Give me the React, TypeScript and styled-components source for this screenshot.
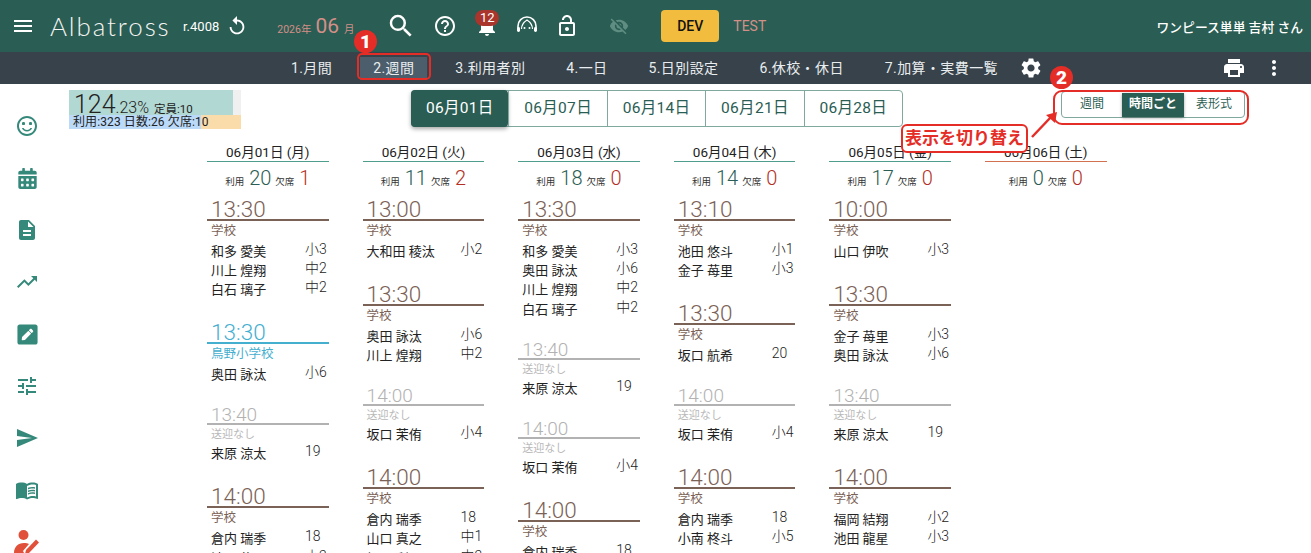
import { createGlobalStyle, styled } from 'styled-components';
import { FaCalendarAlt, FaPenSquare } from 'react-icons/fa';
import {
  MdDescription,
  MdHelpOutline,
  MdMenu,
  MdMenuBook,
  MdMoreVert,
  MdNotifications,
  MdOutlineLockOpen,
  MdPrint,
  MdReplay,
  MdSearch,
  MdSend,
  MdSentimentSatisfiedAlt,
  MdSettings,
  MdTrendingUp,
  MdTune,
  MdVisibilityOff,
} from 'react-icons/md';

type Kind = 'school' | 'pickup' | 'none';
type Group = { time: string; kind: Kind; label: string; kids: [string, string][] };
type Day = { date: string; used: number; absent: number; holiday?: boolean; groups: Group[] };

const school = (time: string, kids: [string, string][]): Group => ({ time, kind: 'school', label: '学校', kids });
const none = (time: string, kids: [string, string][]): Group => ({ time, kind: 'none', label: '送迎なし', kids });

const days: Day[] = [
  {
    date: '06月01日 (月)',
    used: 20,
    absent: 1,
    groups: [
      school('13:30', [['和多 愛美', '小3'], ['川上 煌翔', '中2'], ['白石 璃子', '中2']]),
      { time: '13:30', kind: 'pickup', label: '鳥野小学校', kids: [['奥田 詠汰', '小6']] },
      none('13:40', [['来原 涼太', '19']]),
      school('14:00', [['倉内 瑞季', '18'], ['池田 龍星', '小2']]),
    ],
  },
  {
    date: '06月02日 (火)',
    used: 11,
    absent: 2,
    groups: [
      school('13:00', [['大和田 稜汰', '小2']]),
      school('13:30', [['奥田 詠汰', '小6'], ['川上 煌翔', '中2']]),
      none('14:00', [['坂口 茉侑', '小4']]),
      school('14:00', [['倉内 瑞季', '18'], ['山口 真之', '中1'], ['桐野 利同', '中2']]),
    ],
  },
  {
    date: '06月03日 (水)',
    used: 18,
    absent: 0,
    groups: [
      school('13:30', [['和多 愛美', '小3'], ['奥田 詠汰', '小6'], ['川上 煌翔', '中2'], ['白石 璃子', '中2']]),
      none('13:40', [['来原 涼太', '19']]),
      none('14:00', [['坂口 茉侑', '小4']]),
      school('14:00', [['倉内 瑞季', '18']]),
    ],
  },
  {
    date: '06月04日 (木)',
    used: 14,
    absent: 0,
    groups: [
      school('13:10', [['池田 悠斗', '小1'], ['金子 苺里', '小3']]),
      school('13:30', [['坂口 航希', '20']]),
      none('14:00', [['坂口 茉侑', '小4']]),
      school('14:00', [['倉内 瑞季', '18'], ['小南 柊斗', '小5']]),
    ],
  },
  {
    date: '06月05日 (金)',
    used: 17,
    absent: 0,
    groups: [
      school('10:00', [['山口 伊吹', '小3']]),
      school('13:30', [['金子 苺里', '小3'], ['奥田 詠汰', '小6']]),
      none('13:40', [['来原 涼太', '19']]),
      school('14:00', [['福岡 結翔', '小2'], ['池田 龍星', '小3']]),
    ],
  },
  { date: '06月06日 (土)', used: 0, absent: 0, holiday: true, groups: [] },
];

const navItems = ['1.月間', '2.週間', '3.利用者別', '4.一日', '5.日別設定', '6.休校・休日', '7.加算・実費一覧'];
const weekTabs = ['06月01日', '06月07日', '06月14日', '06月21日', '06月28日'];

const kindColor: Record<Kind, string> = { school: '#7b6256', pickup: '#45afcf', none: '#b2b2b2' };

const GlobalStyle = createGlobalStyle`
  html, body {
    margin: 0;
    height: 100%;
    overflow: hidden;
    background: #fff;
    font-family: Roboto, 'Noto Sans CJK JP', sans-serif;
  }
`;

const Page = styled.div`
  position: relative;
  width: 1311px;
  height: 553px;
  overflow: hidden;
`;

const TopBar = styled.header`
  display: flex;
  align-items: center;
  height: 52px;
  background: #2a5d53;
  color: #fff;
`;

const MenuButton = styled.span`
  display: flex;
  margin: 0 15px 0 11px;
  font-size: 24px;
`;

const Logo = styled.span`
  width: 133px;
  font-family: Lato, sans-serif;
  font-size: 26px;
  font-weight: 300;
  letter-spacing: 1.9px;
  color: #f4f4f2;
`;

const Revision = styled.span`
  font-size: 13px;
`;

const ReloadIcon = styled.span`
  display: flex;
  margin: 0 29px 0 7px;
  font-size: 22px;
`;

const MonthLabel = styled.span`
  display: flex;
  align-items: baseline;
  width: 109px;
  font-size: 10.5px;
  color: #d48f88;
  strong {
    margin: 0 5px 0 4px;
    font-size: 21px;
    font-weight: 400;
  }
`;

const HeadIcon = styled.span<{ $left: number; $size: number; $dim?: boolean }>`
  position: relative;
  display: flex;
  justify-content: center;
  width: ${p => p.$size}px;
  margin-left: ${p => p.$left}px;
  font-size: ${p => p.$size}px;
  color: ${p => (p.$dim ? '#5f8d82' : '#fff')};
`;

const CountBadge = styled.span`
  position: absolute;
  top: -4px;
  left: 0;
  width: 24px;
  height: 16px;
  border-radius: 8px;
  background: #a9352d;
  font-size: 13px;
  line-height: 16px;
  text-align: center;
`;

const DevButton = styled.span`
  display: flex;
  align-items: center;
  justify-content: center;
  width: 58px;
  height: 32px;
  margin-left: 32px;
  border-radius: 4px;
  background: #f2bd3e;
  color: #111;
  font-size: 14px;
  font-weight: 500;
`;

const TestLabel = styled.span`
  margin-left: 14px;
  font-size: 14px;
  color: #d48f88;
`;

const UserName = styled.span`
  margin-left: auto;
  margin-right: 8px;
  font-size: 12.8px;
  font-weight: 500;
`;

const NavBar = styled.nav`
  display: flex;
  align-items: center;
  gap: 15px;
  height: 32px;
  padding-left: 278px;
  background: #37424a;
  color: #e9edef;
`;

const NavItem = styled.span<{ $active: boolean }>`
  height: 23px;
  padding: 0 13px;
  background: ${p => (p.$active ? '#4c5d6b' : 'transparent')};
  font-size: 14px;
  letter-spacing: 0.4px;
  line-height: 23px;
  white-space: nowrap;
`;

const NavIcon = styled.span<{ $left: number }>`
  display: flex;
  margin-left: ${p => p.$left}px;
  font-size: 24px;
  color: #fff;
`;

const Body = styled.div`
  display: flex;
`;

const SideBar = styled.aside`
  display: flex;
  flex-direction: column;
  flex: none;
  gap: 28px;
  width: 54px;
  padding-top: 30px;
  align-items: center;
  color: #35897a;
  font-size: 24px;
`;

const SideIcon = styled.span<{ $size?: number }>`
  display: flex;
  align-items: center;
  height: 24px;
  font-size: ${p => p.$size ?? 24}px;
`;

const Main = styled.main`
  flex: 1;
  min-width: 0;
`;

const Toolbar = styled.div`
  display: flex;
  align-items: flex-start;
  height: 53px;
  padding: 6px 0 0 15px;
`;

const Rate = styled.div`
  position: relative;
  flex: none;
  width: 172px;
  height: 39px;
  margin-right: 170px;
  color: #222;
  background: linear-gradient(#f0f0f0, #f0f0f0) top / 100% 25px no-repeat, #f9dcaa;
`;

const RateFill = styled.div<{ $top: number; $height: number; $color: string }>`
  position: absolute;
  top: ${p => p.$top}px;
  left: 0;
  height: ${p => p.$height}px;
  background: ${p => p.$color};
`;

const RateTop = styled.div`
  position: absolute;
  top: 2px;
  left: 5px;
  display: flex;
  align-items: baseline;
  height: 23px;
  font-size: 11.5px;
  line-height: 25px;
  white-space: nowrap;
  b {
    font-size: 25px;
    font-weight: 300;
  }
  i {
    margin-right: 5px;
    font-size: 16px;
    font-style: normal;
    font-weight: 300;
  }
`;

const RateBottom = styled.div`
  position: absolute;
  top: 25px;
  left: 4px;
  font-size: 12px;
  letter-spacing: 0.1px;
  line-height: 14px;
  white-space: nowrap;
`;

const WeekTabs = styled.div`
  display: flex;
  flex: none;
  height: 37px;
  border: 1px solid #7fa89f;
  border-radius: 4px;
  box-sizing: border-box;
  width: 492px;
  margin-right: 158px;
`;

const WeekTab = styled.span<{ $active: boolean }>`
  flex: 1;
  margin: ${p => (p.$active ? '-1px 0 -1px -1px' : '0')};
  border-left: ${p => (p.$active ? '0' : '1px solid #7fa89f')};
  border-radius: ${p => (p.$active ? '4px' : '0')};
  background: ${p => (p.$active ? '#2a5d53' : 'transparent')};
  box-shadow: ${p => (p.$active ? '0 2px 4px rgba(0,0,0,.35)' : 'none')};
  color: ${p => (p.$active ? '#fff' : '#2a5d53')};
  font-size: 15.5px;
  letter-spacing: 0.3px;
  line-height: ${p => (p.$active ? '37px' : '35px')};
  text-align: center;
`;

const ViewToggle = styled.div`
  display: flex;
  flex: none;
  box-sizing: border-box;
  width: 184px;
  height: 27px;
  margin-top: 1px;
  border: 1px solid #7fa89f;
  border-radius: 4px;
`;

const ViewOption = styled.span<{ $active: boolean; $width: number }>`
  width: ${p => p.$width}px;
  margin-top: 1px;
  background: ${p => (p.$active ? '#2a5d53' : 'transparent')};
  box-shadow: ${p => (p.$active ? '0 1px 3px rgba(0,0,0,.35)' : 'none')};
  color: ${p => (p.$active ? '#fff' : '#2f5f55')};
  font-size: 12px;
  font-weight: ${p => (p.$active ? 700 : 400)};
  line-height: 22px;
  text-align: center;
`;

const Columns = styled.div`
  display: grid;
  grid-template-columns: repeat(6, 121.6px);
  column-gap: 34px;
  margin-left: 153px;
`;

const DayTitle = styled.div<{ $holiday?: boolean }>`
  height: 18px;
  border-bottom: 1px solid ${p => (p.$holiday ? '#d0714f' : '#4f9d8c')};
  color: #222;
  font-size: 13.5px;
  line-height: 18px;
  text-align: center;
`;

const DaySummary = styled.div`
  display: flex;
  align-items: baseline;
  justify-content: center;
  height: 35px;
  color: #333;
  font-size: 9.5px;
  line-height: 32px;
`;

const Used = styled.span`
  margin: 0 4px 0 5px;
  color: #2a5d53;
  font-size: 20px;
  font-weight: 300;
`;

const Absent = styled.span`
  margin-left: 5px;
  color: #b32f25;
  font-size: 20px;
  font-weight: 300;
`;

const TimeGroup = styled.section`
  margin-bottom: 20.8px;
`;

const TimeTitle = styled.div<{ $kind: Kind }>`
  box-sizing: border-box;
  height: ${p => (p.$kind === 'none' ? 20 : 24)}px;
  padding-left: 4px;
  border-bottom: 2px solid ${p => kindColor[p.$kind]};
  color: ${p => kindColor[p.$kind]};
  font-size: ${p => (p.$kind === 'none' ? 19 : 22.5)}px;
  font-weight: 300;
  line-height: ${p => (p.$kind === 'none' ? 20 : 24)}px;
`;

const TimeLabel = styled.div<{ $kind: Kind }>`
  height: ${p => (p.$kind === 'none' ? 19 : 21)}px;
  padding-left: 4px;
  color: ${p => (p.$kind === 'none' ? '#b9b9b9' : kindColor[p.$kind])};
  font-size: ${p => (p.$kind === 'none' ? 11 : 12.5)}px;
  line-height: 20px;
`;

const KidRow = styled.div`
  display: flex;
  height: 19.2px;
  padding-left: 4px;
  color: #222;
  font-size: 13px;
  line-height: 19px;
`;

const KidName = styled.span`
  width: 94px;
  flex: none;
`;

const KidGrade = styled.span`
  margin-top: -2px;
  font-size: 14px;
  font-weight: 300;
`;

const Highlight = styled.div<{ $left: number; $top: number; $width: number; $height: number; $radius: number }>`
  position: absolute;
  left: ${p => p.$left}px;
  top: ${p => p.$top}px;
  box-sizing: border-box;
  width: ${p => p.$width}px;
  height: ${p => p.$height}px;
  border: 2.5px solid #e52d27;
  border-radius: ${p => p.$radius}px;
`;

const StepMark = styled.span<{ $left: number; $top: number }>`
  position: absolute;
  left: ${p => p.$left}px;
  top: ${p => p.$top}px;
  width: 23px;
  height: 23px;
  border-radius: 50%;
  background: #e52d27;
  color: #fff;
  font-size: 19px;
  font-weight: 900;
  line-height: 23px;
  text-align: center;
`;

const Callout = styled.div`
  position: absolute;
  left: 901px;
  top: 124px;
  box-sizing: border-box;
  width: 127px;
  height: 29px;
  border: 2.5px solid #e52d27;
  border-radius: 6px;
  background: #fff;
  color: #e52d27;
  font-size: 17px;
  font-weight: 700;
  line-height: 24px;
  text-align: center;
  white-space: nowrap;
`;

const CalloutArrow = styled.svg`
  position: absolute;
  left: 1028px;
  top: 106px;
  width: 36px;
  height: 36px;
`;

const HeadsetFace = () => (
  <svg width="24" height="24" viewBox="0 0 24 24" fill="none" stroke="#fff" strokeWidth="1.6">
    <path d="M3 17v-5a9 9 0 0 1 18 0v5" />
    <path d="M6.500 15c0-4 2.500-7 5.500-9 3 2 5.500 5 5.500 9" strokeWidth="1.2" />
    <rect x="2" y="13" width="3" height="5" rx="1.400" fill="#fff" stroke="none" />
    <rect x="19" y="13" width="3" height="5" rx="1.400" fill="#fff" stroke="none" />
    <circle cx="9.500" cy="14" r="1" fill="#fff" stroke="none" />
    <circle cx="14.500" cy="14" r="1" fill="#fff" stroke="none" />
  </svg>
);

const PersonPen = () => (
  <svg width="26" height="26" viewBox="0 0 26 26" fill="#e0503a">
    <circle cx="9.500" cy="6" r="5" />
    <path d="M0 24c0-6 4-10 10-10 2 0 3.500.4 5 1l-6 7 1 2z" />
    <path d="M12 21 22 10.500l3 3L15 24l-4 1z" />
  </svg>
);

const App = () => (
  <Page>
    <GlobalStyle />
    <TopBar>
      <MenuButton><MdMenu /></MenuButton>
      <Logo>Albatross</Logo>
      <Revision>r.4008</Revision>
      <ReloadIcon><MdReplay /></ReloadIcon>
      <MonthLabel>2026年<strong>06</strong>月</MonthLabel>
      <HeadIcon $left={0} $size={30}><MdSearch /></HeadIcon>
      <HeadIcon $left={17} $size={24}><MdHelpOutline /></HeadIcon>
      <HeadIcon $left={18} $size={24}>
        <MdNotifications />
        <CountBadge>12</CountBadge>
      </HeadIcon>
      <HeadIcon $left={16} $size={24}><HeadsetFace /></HeadIcon>
      <HeadIcon $left={16} $size={24}><MdOutlineLockOpen /></HeadIcon>
      <HeadIcon $left={30} $size={20} $dim><MdVisibilityOff /></HeadIcon>
      <DevButton>DEV</DevButton>
      <TestLabel>TEST</TestLabel>
      <UserName>ワンピース単単 吉村 さん</UserName>
    </TopBar>
    <NavBar>
      {navItems.map(item => (
        <NavItem key={item} $active={item === '2.週間'}>{item}</NavItem>
      ))}
      <NavIcon $left={-7}><MdSettings /></NavIcon>
      <NavIcon $left={164}><MdPrint /></NavIcon>
      <NavIcon $left={1}><MdMoreVert /></NavIcon>
    </NavBar>
    <Body>
      <SideBar>
        <SideIcon><MdSentimentSatisfiedAlt /></SideIcon>
        <SideIcon $size={21}><FaCalendarAlt /></SideIcon>
        <SideIcon><MdDescription /></SideIcon>
        <SideIcon><MdTrendingUp /></SideIcon>
        <SideIcon $size={23}><FaPenSquare /></SideIcon>
        <SideIcon><MdTune /></SideIcon>
        <SideIcon><MdSend /></SideIcon>
        <SideIcon><MdMenuBook /></SideIcon>
        <SideIcon><PersonPen /></SideIcon>
      </SideBar>
      <Main>
        <Toolbar>
          <Rate>
            <RateFill $top={0} $height={25} $color="#b2d8d3" style={{ width: 164 }} />
            <RateFill $top={25} $height={14} $color="#bbdafa" style={{ width: 132 }} />
            <RateTop><b>124</b><i>.23%</i>定員:10</RateTop>
            <RateBottom>利用:323 日数:26 欠席:10</RateBottom>
          </Rate>
          <WeekTabs>
            {weekTabs.map((tab, i) => (
              <WeekTab key={tab} $active={i === 0}>{tab}</WeekTab>
            ))}
          </WeekTabs>
          <ViewToggle>
            <ViewOption $active={false} $width={60}>週間</ViewOption>
            <ViewOption $active $width={62}>時間ごと</ViewOption>
            <ViewOption $active={false} $width={60}>表形式</ViewOption>
          </ViewToggle>
        </Toolbar>
        <Columns>
          {days.map(day => (
            <div key={day.date}>
              <DayTitle $holiday={day.holiday}>{day.date}</DayTitle>
              <DaySummary>
                利用<Used>{day.used}</Used>欠席<Absent>{day.absent}</Absent>
              </DaySummary>
              {day.groups.map(group => (
                <TimeGroup key={group.time + group.label}>
                  <TimeTitle $kind={group.kind}>{group.time}</TimeTitle>
                  <TimeLabel $kind={group.kind}>{group.label}</TimeLabel>
                  {group.kids.map(([name, grade]) => (
                    <KidRow key={name}>
                      <KidName>{name}</KidName>
                      <KidGrade>{grade}</KidGrade>
                    </KidRow>
                  ))}
                </TimeGroup>
              ))}
            </div>
          ))}
        </Columns>
      </Main>
    </Body>

    <Highlight $left={357} $top={53} $width={74} $height={27} $radius={5} />
    <StepMark $left={354} $top={30}>1</StepMark>
    <Highlight $left={1053} $top={90} $width={196} $height={35} $radius={9} />
    <StepMark $left={1050} $top={66}>2</StepMark>
    <Callout>表示を切り替え</Callout>
    <CalloutArrow viewBox="0 0 36 36">
      <path d="M4 31 23 11" stroke="#e52d27" strokeWidth="2.5" />
      <path d="M18 9 29 6 27 17z" fill="#e52d27" />
    </CalloutArrow>
  </Page>
);

export default App;
